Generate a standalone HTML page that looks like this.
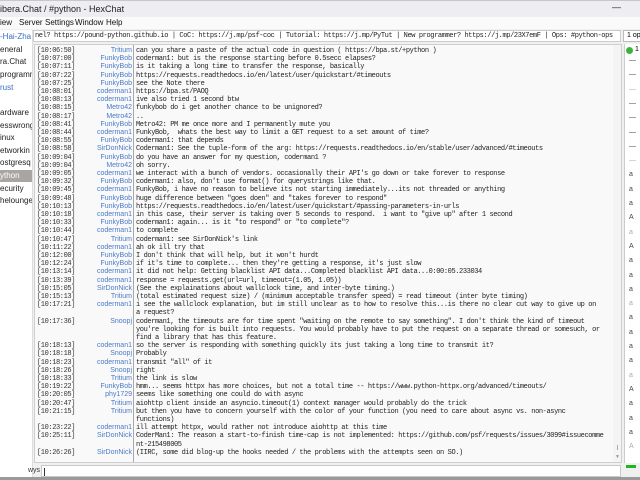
<!DOCTYPE html>
<html><head><meta charset="utf-8"><style>
*{margin:0;padding:0;box-sizing:border-box}
body{width:640px;height:480px;overflow:hidden;background:#f0f0f0;font-family:"Liberation Sans",sans-serif;position:relative}
.abs{position:absolute}
#title{left:0;top:0;width:640px;height:17px;background:#eeedf2;border-top:1px solid #c8c6d0;font-size:9px;color:#222;padding:3px 0 0 0}
#menu{left:0;top:17px;width:640px;height:12px;background:#fafafa;font-size:8px;color:#111}
#menu span{position:absolute;top:1px}
#chan{left:0;top:30px;width:33px;height:447px;background:#fff;border-right:1px solid #ddd;font-size:8px;color:#222;overflow:hidden}
#chan div{position:absolute;left:0;width:33px;height:12px;white-space:nowrap;line-height:12px}
#topic{left:33px;top:30px;width:588px;height:12px;background:#fff;border:1px solid #ccc;font:7px "Liberation Mono",monospace;letter-spacing:-0.4px;color:#222;white-space:nowrap;overflow:hidden;line-height:10px;padding-left:1px}
#ops{left:623px;top:30px;width:20px;height:12px;background:#fff;border:1px solid #bbb;font-size:7px;line-height:10px;padding-left:3px}
#chat{left:34px;top:44px;width:588px;height:419px;background:#f9f9f9;border:1px solid #cfcfcf;overflow:hidden}
#sep{left:98px;top:0;width:1px;height:419px;background:#a8a8a8}
.r{position:absolute;left:0;height:8.2px;font:7px/8.2px "Liberation Mono",monospace;letter-spacing:-0.4px;color:#222;white-space:pre}
.t{position:absolute;left:2px;color:#333}
.n{position:absolute;right:481px;color:#4a7bc8;text-align:right;font-family:"Liberation Sans",sans-serif;letter-spacing:0}
.m{position:absolute;left:101px}
#sb{left:578px;top:0;width:9px;height:419px;background:#f4f4f4}
#users{left:624px;top:44px;width:16px;height:419px;background:#fff;border-left:1px solid #ccc;overflow:hidden}
#inp{left:41px;top:465px;width:580px;height:12px;background:#fff;border:1px solid #c8c8c8}
#bot{left:0;top:477px;width:640px;height:3px;background:#9a9a9a}
</style></head><body>
<div id="title" class="abs">ibera.Chat / #python - HexChat<span style="position:absolute;left:612px;top:1px;font-size:9px">—</span></div>
<div id="menu" class="abs"><span style="left:0">iew</span><span style="left:19px">Server</span><span style="left:45px">Settings</span><span style="left:75px">Window</span><span style="left:106px">Help</span></div>
<div id="chan" class="abs">
<div style="top:1px;color:#3a6fc4">-Hai-Zha</div>
<div style="top:14px">eneral</div>
<div style="top:26px">ra.Chat</div>
<div style="top:39px">programm</div>
<div style="top:52px;color:#3a6fc4">rust</div>
<div style="top:77px">ardware</div>
<div style="top:90px">esswrong</div>
<div style="top:102px">inux</div>
<div style="top:115px">etworkin</div>
<div style="top:127px">ostgresq</div>
<div style="top:140px;background:#a9a6a1;color:#fff">ython</div>
<div style="top:153px">ecurity</div>
<div style="top:165px">helounge</div>
</div>
<div id="topic" class="abs">nel? https://pound-python.github.io | CoC: https://j.mp/psf-coc | Tutorial: https://j.mp/PyTut | New programmer? https://j.mp/23X7emF | Ops: #python-ops</div>
<div id="ops" class="abs">1 op</div>
<div id="chat" class="abs">
<div id="sep" class="abs"></div>
<div id="sb" class="abs"><div style="position:absolute;left:4px;top:400px;width:1px;height:5px;background:#aaa"></div><div style="position:absolute;left:2px;top:409px;font-size:5px;color:#999">▼</div></div>
<div id="rows"></div>
</div>
<div id="users" class="abs"></div>
<div class="abs" style="left:28px;top:467px;font-size:7px;color:#333">wys</div>
<div id="inp" class="abs"><div style="position:absolute;left:2px;top:2px;width:1px;height:8px;background:#333"></div></div>
<div class="abs" style="left:626px;top:465px;width:10px;height:3px;background:#22b422"></div>
<div id="bot" class="abs"></div>
<script>
var R=[
["10:06:50","Tritium","can you share a paste of the actual code in question ( https://bpa.st/+python )"],
["10:07:00","FunkyBob","coderman1: but is the response starting before 0.5secc elapses?"],
["10:07:11","FunkyBob","is it taking a long time to transfer the response, basically"],
["10:07:22","FunkyBob","https://requests.readthedocs.io/en/latest/user/quickstart/#timeouts"],
["10:07:25","FunkyBob","see the Note there"],
["10:08:01","coderman1","https://bpa.st/PAOQ"],
["10:08:13","coderman1","ive also tried 1 second btw"],
["10:08:15","Metro42","funkybob do i get another chance to be unignored?"],
["10:08:17","Metro42",".."],
["10:08:41","FunkyBob","Metro42: PM me once more and I permanently mute you"],
["10:08:44","coderman1","FunkyBob,  whats the best way to limit a GET request to a set amount of time?"],
["10:08:55","FunkyBob","coderman1: that depends"],
["10:08:58","SirDonNick","Coderman1: See the tuple-form of the arg: https://requests.readthedocs.io/en/stable/user/advanced/#timeouts"],
["10:09:04","FunkyBob","do you have an answer for my question, coderman1 ?"],
["10:09:04","Metro42","oh sorry."],
["10:09:05","coderman1","we interact with a bunch of vendors. occasionally their API's go down or take forever to response"],
["10:09:32","FunkyBob","coderman1: also, don't use format() for querystrings like that."],
["10:09:45","coderman1","FunkyBob, i have no reason to believe its not starting immediately...its not threaded or anything"],
["10:09:48","FunkyBob","huge difference between \"goes doen\" and \"takes forever to respond\""],
["10:10:13","FunkyBob","https://requests.readthedocs.io/en/latest/user/quickstart/#passing-parameters-in-urls"],
["10:10:18","coderman1","in this case, their server is taking over 5 seconds to respond.  i want to \"give up\" after 1 second"],
["10:10:33","FunkyBob","coderman1: again... is it \"to respond\" or \"to complete\"?"],
["10:10:44","coderman1","to complete"],
["10:10:47","Tritium","coderman1: see SirDonNick's link"],
["10:11:22","coderman1","ah ok ill try that"],
["10:12:00","FunkyBob","I don't think that will help, but it won't hurdt"],
["10:12:24","FunkyBob","if it's time to complete... then they're getting a response, it's just slow"],
["10:13:14","coderman1","it did not help: Getting blacklist API data...Completed blacklist API data...0:00:05.233034"],
["10:13:39","coderman1","response = requests.get(url=url, timeout=(1.05, 1.05))"],
["10:15:05","SirDonNick","(See the explainations about wallclock time, and inter-byte timing.)"],
["10:15:13","Tritium","(total estimated request size) / (minimum acceptable transfer speed) = read timeout (inter byte timing)"],
["10:17:21","coderman1","i see the wallclock explanation, but im still unclear as to how to resolve this...is there no clear cut way to give up on\na request?"],
["10:17:36","Snoopj","coderman1, the timeouts are for time spent \"waiting on the remote to say something\". I don't think the kind of timeout\nyou're looking for is built into requests. You would probably have to put the request on a separate thread or somesuch, or\nfind a library that has this feature."],
["10:18:13","coderman1","so the server is responding with something quickly its just taking a long time to transmit it?"],
["10:18:18","Snoopj","Probably"],
["10:18:23","coderman1","transmit \"all\" of it"],
["10:18:26","Snoopj","right"],
["10:18:33","Tritium","the link is slow"],
["10:19:22","FunkyBob","hmm... seems httpx has more choices, but not a total time -- https://www.python-httpx.org/advanced/timeouts/"],
["10:20:05","phy1729","seems like something one could do with async"],
["10:20:47","Tritium","aiohttp client inside an asyncio.timeout(1) context manager would probably do the trick"],
["10:21:15","Tritium","but then you have to concern yourself with the color of your function (you need to care about async vs. non-async\nfunctions)"],
["10:23:22","coderman1","ill attempt httpx, would rather not introduce aiohttp at this time"],
["10:25:11","SirDonNick","CoderMan1: The reason a start-to-finish time-cap is not implemented: https://github.com/psf/requests/issues/3099#issuecomme\nnt-215498005"],
["10:26:26","SirDonNick","(IIRC, some did blog-up the hooks needed / the problems with the attempts seen on SO.)"]
];
var h="",y=2;
R.forEach(function(r){var n=r[2].split("\n").length;
h+='<div class="r" style="top:'+y.toFixed(1)+'px;width:578px;height:'+(8.2*n)+'px"><span class="t">['+r[0]+']</span><span class="n">'+r[1]+'</span><span class="m">'+r[2].replace(/&/g,"&amp;").replace(/</g,"&lt;")+'</span></div>';
y+=8.2*n;});
document.getElementById("rows").innerHTML=h;
var u='<div style="position:absolute;left:1px;top:3px;width:7px;height:7px;border-radius:50%;background:#3cb43c"></div><div style="position:absolute;left:10px;top:2px;font-size:7px">1</div>';
var lab=["—","—","—","—","—","—","—","—","a","a","a","A","a","A","a","a","a","a","a","a","a","a","a","A","a","a","a","A"];
for(var i=0;i<lab.length;i++){var c=(i%5==2)?"#aaa":"#444";u+='<div style="position:absolute;left:4px;top:'+(13+i*14.3)+'px;font-size:7px;color:'+c+'">'+lab[i]+'</div>';}
document.getElementById("users").innerHTML=u;
</script>
</body></html>
